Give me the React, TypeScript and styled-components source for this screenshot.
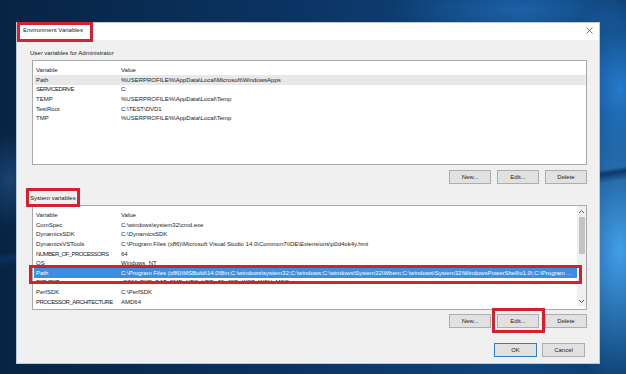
import React from 'react'
import styled, { createGlobalStyle, css } from 'styled-components'

const GlobalStyle = createGlobalStyle`
  html, body {
    margin: 0;
    padding: 0;
    overflow: hidden;
  }
  body {
    font-family: "Liberation Sans", Arial, sans-serif;
  }
`

type Item = { name: string; value: string }

const userVars: Item[] = [
  { name: 'Path', value: '%USERPROFILE%\\AppData\\Local\\Microsoft\\WindowsApps' },
  { name: 'SERVICEDRIVE', value: 'C:' },
  { name: 'TEMP', value: '%USERPROFILE%\\AppData\\Local\\Temp' },
  { name: 'TestRoot', value: 'C:\\TEST\\DVD1' },
  { name: 'TMP', value: '%USERPROFILE%\\AppData\\Local\\Temp' },
]

const systemVars: Item[] = [
  { name: 'ComSpec', value: 'C:\\windows\\system32\\cmd.exe' },
  { name: 'DynamicsSDK', value: 'C:\\DynamicsSDK' },
  { name: 'DynamicsVSTools', value: 'C:\\Program Files (x86)\\Microsoft Visual Studio 14.0\\Common7\\IDE\\Extensions\\p0d4ok4y.hmt' },
  { name: 'NUMBER_OF_PROCESSORS', value: '64' },
  { name: 'OS', value: 'Windows_NT' },
  {
    name: 'Path',
    value: 'C:\\Program Files (x86)\\MSBuild\\14.0\\Bin;C:\\windows\\system32;C:\\windows;C:\\windows\\System32\\Wbem;C:\\windows\\System32\\WindowsPowerShell\\v1.0\\;C:\\Program Files\\dotnet\\;C:\\Program Files\\Git\\cmd',
  },
  { name: 'PATHEXT', value: '.COM;.EXE;.BAT;.CMD;.VBS;.VBE;.JS;.JSE;.WSF;.WSH;.MSC' },
  { name: 'PerfSDK', value: 'C:\\PerfSDK' },
  { name: 'PROCESSOR_ARCHITECTURE', value: 'AMD64' },
]

// all-caps names render narrower in the original UI font
const isCaps = (s: string) => s.length > 4 && s === s.toUpperCase()

const redBox = css`
  position: absolute;
  content: "";
  box-sizing: border-box;
  border: 3px solid #d3212f;
  pointer-events: none;
`

export default () => {
  return (
    <Page>
      <GlobalStyle />
      <Dialog>
        <TitleBar>
          <Title>Environment Variables</Title>
          <CloseBtn>
            <svg width="7" height="7" viewBox="0 0 7 7">
              <path d="M0.5 0.5 L6.5 6.5 M6.5 0.5 L0.5 6.5" stroke="#555" strokeWidth="0.8" />
            </svg>
          </CloseBtn>
        </TitleBar>
        <Content>
          <GroupLabel>User variables for Administrator</GroupLabel>
          <ListBox>
            <HeaderRow>
              <span>Variable</span>
              <span>Value</span>
            </HeaderRow>
            {userVars.map((v, i) => (
              <Row key={v.name} $state={i === 0 ? 'inactive' : 'none'}>
                <Name $caps={isCaps(v.name)}>{v.name}</Name>
                <Value>{v.value}</Value>
              </Row>
            ))}
          </ListBox>
          <ButtonRow>
            <Button>New...</Button>
            <Button>Edit...</Button>
            <Button>Delete</Button>
          </ButtonRow>

          <GroupLabel $marked>System variables</GroupLabel>
          <ListBox>
            <ListInner>
              <Rows>
                <HeaderRow>
                  <span>Variable</span>
                  <span>Value</span>
                </HeaderRow>
                {systemVars.map((v) => (
                  <Row key={v.name} $state={v.name === 'Path' ? 'active' : 'none'}>
                    <Name $caps={isCaps(v.name)}>{v.name}</Name>
                    <Value>{v.value}</Value>
                  </Row>
                ))}
              </Rows>
              <ScrollBar>
                <svg width="7" height="5" viewBox="0 0 7 5">
                  <path d="M1 4 L3.5 1.5 L6 4" stroke="#606060" strokeWidth="1" fill="none" />
                </svg>
                <Thumb />
                <Track />
                <svg width="7" height="5" viewBox="0 0 7 5">
                  <path d="M1 1 L3.5 3.5 L6 1" stroke="#606060" strokeWidth="1" fill="none" />
                </svg>
              </ScrollBar>
            </ListInner>
          </ListBox>
          <ButtonRow $tight>
            <Button>New...</Button>
            <Button $marked>Edit...</Button>
            <Button>Delete</Button>
          </ButtonRow>

          <Footer>
            <Button $primary $wide>OK</Button>
            <Button $wide>Cancel</Button>
          </Footer>
        </Content>
      </Dialog>
    </Page>
  )
}

const Page = styled.div`
  width: 626px;
  height: 374px;
  box-sizing: border-box;
  padding: 23px 0 0 17px;
  overflow: hidden;
  background-color: #0a2c52;
  background-image:
    linear-gradient(172deg, transparent 0%, transparent 55%, rgba(10, 50, 100, 0.9) 56%, transparent 58%),
    radial-gradient(ellipse 90px 200px at 620px 250px, rgba(70, 165, 240, 0.95), transparent 70%),
    radial-gradient(ellipse 70px 120px at 620px 90px, rgba(40, 130, 215, 0.9), transparent 80%),
    radial-gradient(ellipse 160px 40px at 520px 10px, rgba(30, 100, 170, 0.9), transparent 80%),
    radial-gradient(ellipse 40px 60px at 10px 180px, rgba(30, 75, 125, 0.8), transparent 80%),
    linear-gradient(90deg, #072443 0%, #0b3362 45%, #0f4680 85%, #0b3a6c 100%);
`

const Dialog = styled.div`
  width: 582px;
  height: 340px;
  background: #f0f0f0;
  box-shadow: 0 0 0 1px #bcc9d6;
  display: flex;
  flex-direction: column;
  font-size: 6px;
  line-height: 8px;
  color: #1b1b1b;
`

const TitleBar = styled.div`
  height: 17px;
  background: #ffffff;
  display: flex;
  justify-content: space-between;
  align-items: flex-start;
  padding: 3px 6px 0 6px;
  box-sizing: border-box;
`

const Title = styled.span`
  position: relative;
  &::after {
    ${redBox};
    left: -6px;
    right: -10px;
    top: -4px;
    bottom: -8px;
  }
`

const CloseBtn = styled.span`
  display: flex;
  padding-top: 1px;
`

const Content = styled.div`
  padding: 9px 12px 0 13px;
  display: flex;
  flex-direction: column;
`

const GroupLabel = styled.div<{ $marked?: boolean }>`
  position: relative;
  align-self: flex-start;
  margin-top: ${p => (p.$marked ? '10px' : '0')};
  ${p =>
    p.$marked &&
    css`
      &::after {
        ${redBox};
        left: -4px;
        right: -4px;
        top: -6px;
        bottom: -5px;
      }
    `}
`

const ListBox = styled.div`
  margin: 3px 0 0 2px;
  width: 555px;
  height: 105px;
  box-sizing: border-box;
  border: 1px solid #a9a9a9;
  background: #ffffff;
  padding-top: 3px;
`

const ListInner = styled.div`
  display: flex;
  height: 100%;
  margin-top: -3px;
`

const Rows = styled.div`
  flex: 1;
  min-width: 0;
  padding-top: 3px;
`

const ScrollBar = styled.div`
  width: 9px;
  background: #f0f0f0;
  display: flex;
  flex-direction: column;
  align-items: center;
  padding: 3px 0 2px;
  box-sizing: border-box;
  gap: 3px;
`

const Thumb = styled.div`
  width: 6px;
  height: 37px;
  background: #c4c4c4;
`

const Track = styled.div`
  flex: 1;
`

const HeaderRow = styled.div`
  height: 11px;
  display: grid;
  grid-template-columns: 85px 1fr;
  align-items: center;
  padding: 0 3px 0 3px;
`

const Row = styled.div<{ $state: 'none' | 'inactive' | 'active' }>`
  position: relative;
  height: 9.6px;
  display: grid;
  grid-template-columns: 85px 1fr;
  align-items: center;
  margin-left: 1px;
  padding: 0 3px 0 2px;
  ${p =>
    p.$state === 'inactive' &&
    css`
      background: #e8e8e8;
    `}
  ${p =>
    p.$state === 'active' &&
    css`
      background: #3a8fe3;
      color: #ffffff;
      z-index: 1;
      &::after {
        ${redBox};
        left: -5px;
        right: -5px;
        top: -3px;
        bottom: -6px;
      }
    `}
`

const Name = styled.span<{ $caps?: boolean }>`
  white-space: nowrap;
  letter-spacing: ${p => (p.$caps ? '-0.55px' : '0')};
`

const Value = styled.span`
  white-space: nowrap;
  overflow: hidden;
  text-overflow: ellipsis;
`

const ButtonRow = styled.div<{ $tight?: boolean }>`
  display: flex;
  justify-content: flex-end;
  gap: 6px;
  margin-top: ${p => (p.$tight ? '4px' : '5px')};
`

const Footer = styled.div`
  display: flex;
  justify-content: flex-end;
  gap: 5px;
  margin-top: 15px;
  padding-right: 2px;
`

const Button = styled.div<{ $primary?: boolean; $marked?: boolean; $wide?: boolean }>`
  position: relative;
  width: ${p => (p.$wide ? '43px' : '42px')};
  height: 14px;
  box-sizing: border-box;
  background: #e1e1e1;
  border: 1px solid ${p => (p.$primary ? '#2f7fd0' : '#adadad')};
  display: flex;
  align-items: center;
  justify-content: center;
  ${p =>
    p.$marked &&
    css`
      &::after {
        ${redBox};
        left: -6px;
        right: -7px;
        top: -7px;
        bottom: -6px;
      }
    `}
`
